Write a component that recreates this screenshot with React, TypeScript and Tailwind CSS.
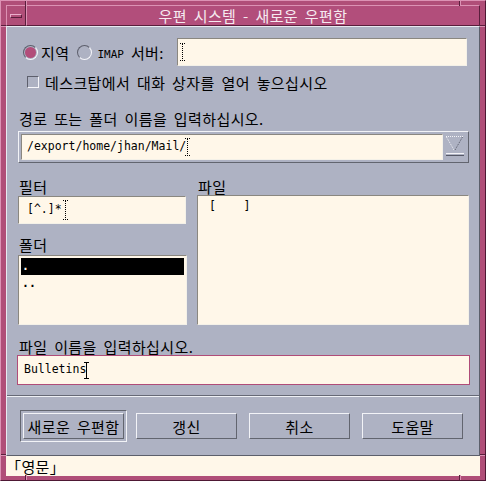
import React from "react";

const ko =
  "font-['Noto_Sans_CJK_KR',sans-serif] text-[15px] leading-[17px] tracking-[0.4px] [word-spacing:3px] text-black whitespace-pre";
const monoBase = "font-['DejaVu_Sans_Mono',monospace] text-[11.5px] whitespace-pre";
const mono = `${monoBase} text-black`;
const sunken =
  "border border-t-[#8a8780] border-l-[#8a8780] border-b-[#f4f1e8] border-r-[#f4f1e8]";
const raised =
  "border border-t-[#f2f3f7] border-l-[#f2f3f7] border-b-[#62656f] border-r-[#62656f]";
const pinkRaised =
  "border border-t-[#dc92b4] border-l-[#dc92b4] border-b-[#5a1e3c] border-r-[#5a1e3c]";

const Caret = ({ dotted = false, h = 18 }: { dotted?: boolean; h?: number }) => (
  <svg width="5" height={h} className="shrink-0" viewBox={`0 0 5 ${h}`}>
    <g
      stroke="#000"
      strokeWidth="1"
      strokeDasharray={dotted ? "1 1" : undefined}
      fill="none"
    >
      <line x1="0" y1="0.5" x2="5" y2="0.5" />
      <line x1="2.5" y1="1" x2="2.5" y2={h - 1} />
      <line x1="0" y1={h - 0.5} x2="5" y2={h - 0.5} />
    </g>
  </svg>
);

const Radio = ({ on = false }: { on?: boolean }) => (
  <div className="w-[15px] h-[15px] rounded-full border-[1.5px] border-t-[#5d5f6c] border-l-[#5d5f6c] border-b-[#f6f6fa] border-r-[#f6f6fa] flex items-center justify-center shrink-0">
    {on && <div className="w-[11px] h-[11px] rounded-full bg-[#b24d7a]" />}
  </div>
);

const Btn = ({ label }: { label: string }) => (
  <div
    className={`w-[101px] h-[26px] ${raised} flex items-center justify-center bg-[#aeb2c3]`}
  >
    <span className={ko}>{label}</span>
  </div>
);

export default function App() {
  return (
    <div className="relative w-[486px] h-[481px] bg-[#b04e78] border border-t-[#dc92b4] border-l-[#dc92b4] border-r-[#4e1834] border-b-[#4e1834] px-[5px] pt-[4px] pb-[4px] flex flex-col overflow-hidden">
      {/* corner ticks of the frame */}
      <div className="absolute left-[24px] top-[-1px] w-[2px] h-[6px] border-l border-r border-l-[#5a1e3c] border-r-[#dc92b4]" />
      <div className="absolute left-[458px] top-[-1px] w-[2px] h-[6px] border-l border-r border-l-[#5a1e3c] border-r-[#dc92b4]" />
      <div className="absolute left-[24px] bottom-[-1px] w-[2px] h-[6px] border-l border-r border-l-[#5a1e3c] border-r-[#dc92b4]" />
      <div className="absolute left-[458px] bottom-[-1px] w-[2px] h-[6px] border-l border-r border-l-[#5a1e3c] border-r-[#dc92b4]" />
      <div className="absolute left-[-1px] top-[24px] w-[6px] h-[2px] border-t border-b border-t-[#5a1e3c] border-b-[#dc92b4]" />
      <div className="absolute right-[-1px] top-[24px] w-[6px] h-[2px] border-t border-b border-t-[#5a1e3c] border-b-[#dc92b4]" />
      <div className="absolute left-[-1px] top-[453px] w-[6px] h-[2px] border-t border-b border-t-[#5a1e3c] border-b-[#dc92b4]" />
      <div className="absolute right-[-1px] top-[453px] w-[6px] h-[2px] border-t border-b border-t-[#5a1e3c] border-b-[#dc92b4]" />

      {/* title bar */}
      <div className="h-[21px] flex shrink-0">
        <div className={`w-[20px] h-full ${pinkRaised} flex items-center justify-center`}>
          <div className="w-[12px] h-[4px] border border-t-[#eaaecb] border-l-[#eaaecb] border-b-[#5a1e3c] border-r-[#5a1e3c]" />
        </div>
        <div className={`flex-1 h-full ${pinkRaised} bg-[#b24e7b] flex items-center justify-center`}>
          <span className="font-['Noto_Sans_CJK_KR',sans-serif] text-[15px] leading-[17px] tracking-[0.4px] [word-spacing:3px] text-[#f6eaf0] whitespace-pre">
            우편 시스템 - 새로운 우편함
          </span>
        </div>
      </div>

      {/* main panel */}
      <div className="h-[430px] shrink-0 bg-[#aeb2c3] border border-t-[#e8e9f0] border-l-[#e8e9f0] border-b-[#5c5f6b] border-r-[#5c5f6b] flex flex-col">
        <div className="pl-[11px] pr-[10px] flex flex-col">
          {/* source row */}
          <div className="mt-[11px] h-[28px] flex items-center">
            <div className="ml-[5px]">
              <Radio on />
            </div>
            <span className={`${ko} ml-[3px]`}>지역</span>
            <div className="ml-[8px]">
              <Radio />
            </div>
            <span className="font-['DejaVu_Sans_Mono',monospace] text-[11px] leading-[11px] text-black ml-[5px] mt-[5px]">
              IMAP
            </span>
            <span className={`${ko} ml-[7px]`}>서버:</span>
            <div
              className={`ml-auto mr-[2px] w-[290px] h-[28px] bg-[#fff7e9] ${sunken} flex items-center pl-[2px]`}
            >
              <Caret dotted h={18} />
            </div>
          </div>

          {/* checkbox row */}
          <div className="mt-[9px] h-[14px] flex items-center">
            <div className="ml-[9px] w-[12px] h-[12px] border border-t-[#5d5f6c] border-l-[#5d5f6c] border-b-[#f6f6fa] border-r-[#f6f6fa]" />
            <span className={`${ko} ml-[6px]`}>데스크탑에서 대화 상자를 열어 놓으십시오</span>
          </div>

          <div className={`${ko} mt-[21px] h-[17px] ml-[1px]`}>경로 또는 폴더 이름을 입력하십시오.</div>

          {/* path combo */}
          <div className={`mt-[4px] h-[32px] ${raised} p-[2px] flex`}>
            <div className={`flex-1 bg-[#fff7e9] ${sunken} flex items-center pl-[5px]`}>
              <span className={mono}>/export/home/jhan/Mail/</span>
              <div className="-ml-[1px]">
                <Caret dotted h={18} />
              </div>
            </div>
            <div className="w-[23px] flex items-start justify-center pt-[1px]">
              <svg width="20" height="22" viewBox="0 0 20 22">
                <g strokeDasharray="1 1" fill="none" strokeWidth="1">
                  <line x1="1" y1="1.5" x2="18" y2="1.5" stroke="#f4f4f8" />
                  <line x1="1.5" y1="2" x2="9" y2="15" stroke="#f4f4f8" />
                  <line x1="17.5" y1="2" x2="10" y2="15" stroke="#555866" />
                </g>
                <line x1="1" y1="18.5" x2="19" y2="18.5" stroke="#f4f4f8" />
                <line x1="1" y1="20.5" x2="19" y2="20.5" stroke="#555866" />
              </svg>
            </div>
          </div>

          {/* filter / folders / files */}
          <div className="flex">
            <div className="w-[169px] flex flex-col">
              <div className={`${ko} mt-[15px] h-[17px] ml-[1px]`}>필터</div>
              <div
                className={`mt-[1px] w-[168px] h-[28px] bg-[#fff7e9] ${sunken} flex items-center pl-[8px]`}
              >
                <span className={mono}>[^.]*</span>
                <div className="ml-[1px]">
                  <Caret dotted h={20} />
                </div>
              </div>
              <div className={`${ko} mt-[12px] h-[17px] ml-[1px]`}>폴더</div>
              <div className={`mt-[2px] h-[70px] bg-[#fff7e9] ${sunken} pt-[2px] px-[2px]`}>
                <div className={`${monoBase} font-bold h-[17px] leading-[17px] bg-black text-[#fff7e9] pl-[1px]`}>.</div>
                <div className={`${mono} font-bold h-[17px] leading-[17px] pl-[1px]`}>..</div>
              </div>
            </div>
            <div className="ml-[10px] flex-1 flex flex-col">
              <div className={`${ko} mt-[15px] h-[17px] ml-[1px]`}>파일</div>
              <div className={`h-[130px] bg-[#fff7e9] ${sunken} pl-[11px] pt-[2px]`}>
                <div className={`${mono} leading-[17px]`}>[    ]</div>
              </div>
            </div>
          </div>

          <div className={`${ko} mt-[13px] h-[17px] ml-[1px]`}>파일 이름을 입력하십시오.</div>

          <div className="-mx-[1px] h-[30px] bg-[#fff7e9] border border-[#b04c78] flex items-center pl-[6px]">
            <span className={mono}>Bulletins</span>
            <div className="-ml-[2px]">
              <Caret h={17} />
            </div>
          </div>
        </div>

        {/* separator */}
        <div className="mt-[10px] h-[2px] border-t border-b border-t-[#666976] border-b-[#eef0f5]" />

        {/* buttons */}
        <div className="flex-1 flex items-center pl-[13px]">
          <div className="w-[107px] h-[32px] border border-t-[#62656f] border-l-[#62656f] border-b-[#f2f3f7] border-r-[#f2f3f7] p-[2px]">
            <Btn label="새로운 우편함" />
          </div>
          <div className="ml-[9px]">
            <Btn label="갱신" />
          </div>
          <div className="ml-[12px]">
            <Btn label="취소" />
          </div>
          <div className="ml-[12px]">
            <Btn label="도움말" />
          </div>
        </div>
      </div>

      {/* status bar */}
      <div className="h-[20px] shrink-0 bg-[#fff7e9] flex items-center">
        <span className={ko}>「영문」</span>
      </div>
    </div>
  );
}
